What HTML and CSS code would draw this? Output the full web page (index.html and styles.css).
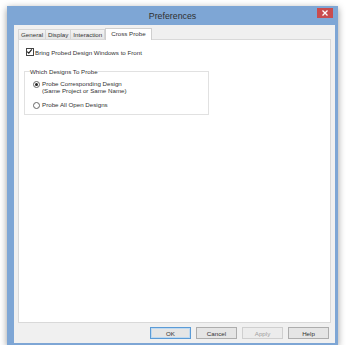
FILE: index.html
```html
<!DOCTYPE html>
<html lang="en">
<head>
  <meta charset="UTF-8" />
  <title>Preferences</title>
  <link rel="stylesheet" href="styles.css">
</head>
<body>

  <!-- Dialog window -->
  <div class="window">
    <div class="titlebar">
      <span></span>
      <span class="title">Preferences</span>
      <span class="close">
        <svg width="6" height="6" viewBox="0 0 6 6"><path d="M0.5 0.5L5.5 5.5M5.5 0.5L0.5 5.5" stroke="#fff" stroke-width="1.3"/></svg>
      </span>
    </div>

    <div class="client">
      <!-- Tabs -->
      <div class="tabs">
        <span class="tab">General</span>
        <span class="tab">Display</span>
        <span class="tab">Interaction</span>
        <span class="tab active">Cross Probe</span>
      </div>

      <!-- Tab page -->
      <div class="page">
        <label class="option">
          <span class="check">
            <svg width="7" height="7" viewBox="0 0 7 7"><path d="M1.2 3.6L2.8 5.2L5.8 1.4" fill="none" stroke="#222" stroke-width="1.2"/></svg>
          </span>
          Bring Probed Design Windows to Front
        </label>

        <fieldset class="group">
          <legend>Which Designs To Probe</legend>
          <label class="option radio-row">
            <span class="radio on"></span>
            <span>Probe Corresponding Design<br>(Same Project or Same Name)</span>
          </label>
          <label class="option radio-row">
            <span class="radio"></span>
            <span>Probe All Open Designs</span>
          </label>
        </fieldset>
      </div>

      <!-- Dialog buttons -->
      <div class="buttons">
        <button class="btn default">OK</button>
        <button class="btn">Cancel</button>
        <button class="btn disabled">Apply</button>
        <button class="btn">Help</button>
      </div>
    </div>
  </div>

</body>
</html>
```

FILE: styles.css
```css
body {
  margin: 0;
  background-color: #fff;
  font-family: "Liberation Sans", Arial, sans-serif;
  color: #333;
}
.window {
  margin: 6px 0 0 7px;
  width: 331px;
  height: 339px;
  background-color: #7ea6d5;
  box-shadow: 0 2px 7px rgba(0, 0, 0, 0.4);
  display: flex;
  flex-direction: column;
}
.titlebar {
  height: 19px;
  display: grid;
  grid-template-columns: 1fr auto 1fr;
  align-items: center;
}
.title {
  font-size: 8.8px;
  color: #2f2f2f;
  padding-top: 1px;
}
.close {
  justify-self: end;
  align-self: start;
  margin: 2px 5px 0 0;
  width: 16px;
  height: 10px;
  background-color: #c94c4e;
  display: flex;
  align-items: center;
  justify-content: center;
}
.client {
  flex: 1;
  margin: 0 3px 2px 7px;
  background-color: #f0f0f0;
  padding: 4px;
  display: flex;
  flex-direction: column;
  font-size: 6.2px;
}
.tabs {
  display: flex;
  align-items: flex-end;
  height: 10px;
  position: relative;
  z-index: 1;
}
.tab {
  height: 9px;
  line-height: 9px;
  padding: 0 2px;
  border: 1px solid #d6d6d6;
  border-bottom: none;
  margin-right: -1px;
  background: linear-gradient(#f3f3f3, #e6e6e6);
  color: #333;
}
.tab.active {
  height: 11px;
  line-height: 10px;
  padding: 0 5px;
  background: #fff;
  margin-bottom: -1px;
  margin-left: 1px;
  border-color: #cfcfcf;
}
.page {
  flex: 1;
  background-color: #fff;
  border: 1px solid #d9d9d9;
  padding: 8px 6px;
}
.option {
  display: flex;
  align-items: center;
  gap: 1px;
  color: #333;
}
.check {
  width: 6px;
  height: 6px;
  border: 1px solid #444;
  background: #fff;
  display: flex;
  margin-left: 1px;
}
.check svg {
  margin: -1px 0 0 -1px;
}
.group {
  margin: 12px 0 0 -1px;
  width: 185px;
  height: 47px;
  padding: 3px 8px 0;
  border: 1px solid #e1e1e1;
  box-sizing: border-box;
}
.group legend {
  padding: 0;
  margin-left: -3px;
  color: #333;
}
.radio-row {
  align-items: flex-start;
  margin-top: 2px;
  gap: 2px;
}
.radio-row + .radio-row {
  margin-top: 7px;
}
.radio {
  flex: none;
  width: 5px;
  height: 5px;
  border: 1px solid #666;
  border-radius: 50%;
  background: #fff;
  margin-top: 1px;
  position: relative;
}
.radio.on::after {
  content: "";
  position: absolute;
  left: 1px;
  top: 1px;
  width: 3px;
  height: 3px;
  border-radius: 50%;
  background: #222;
}
.buttons {
  display: flex;
  justify-content: flex-end;
  gap: 5px;
  margin-top: 4px;
  padding-right: 2px;
}
.btn {
  width: 41px;
  height: 12px;
  padding: 0;
  font-family: inherit;
  font-size: 6.2px;
  color: #333;
  background: #e5e5e5;
  border: 1px solid #adadad;
  border-radius: 0;
}
.btn.default {
  border-color: #5b9bd6;
  box-shadow: inset 0 0 0 1px #bfd9f0;
}
.btn.disabled {
  color: #a0a0a0;
  border-color: #cfcfcf;
  background: #ececec;
}
```
